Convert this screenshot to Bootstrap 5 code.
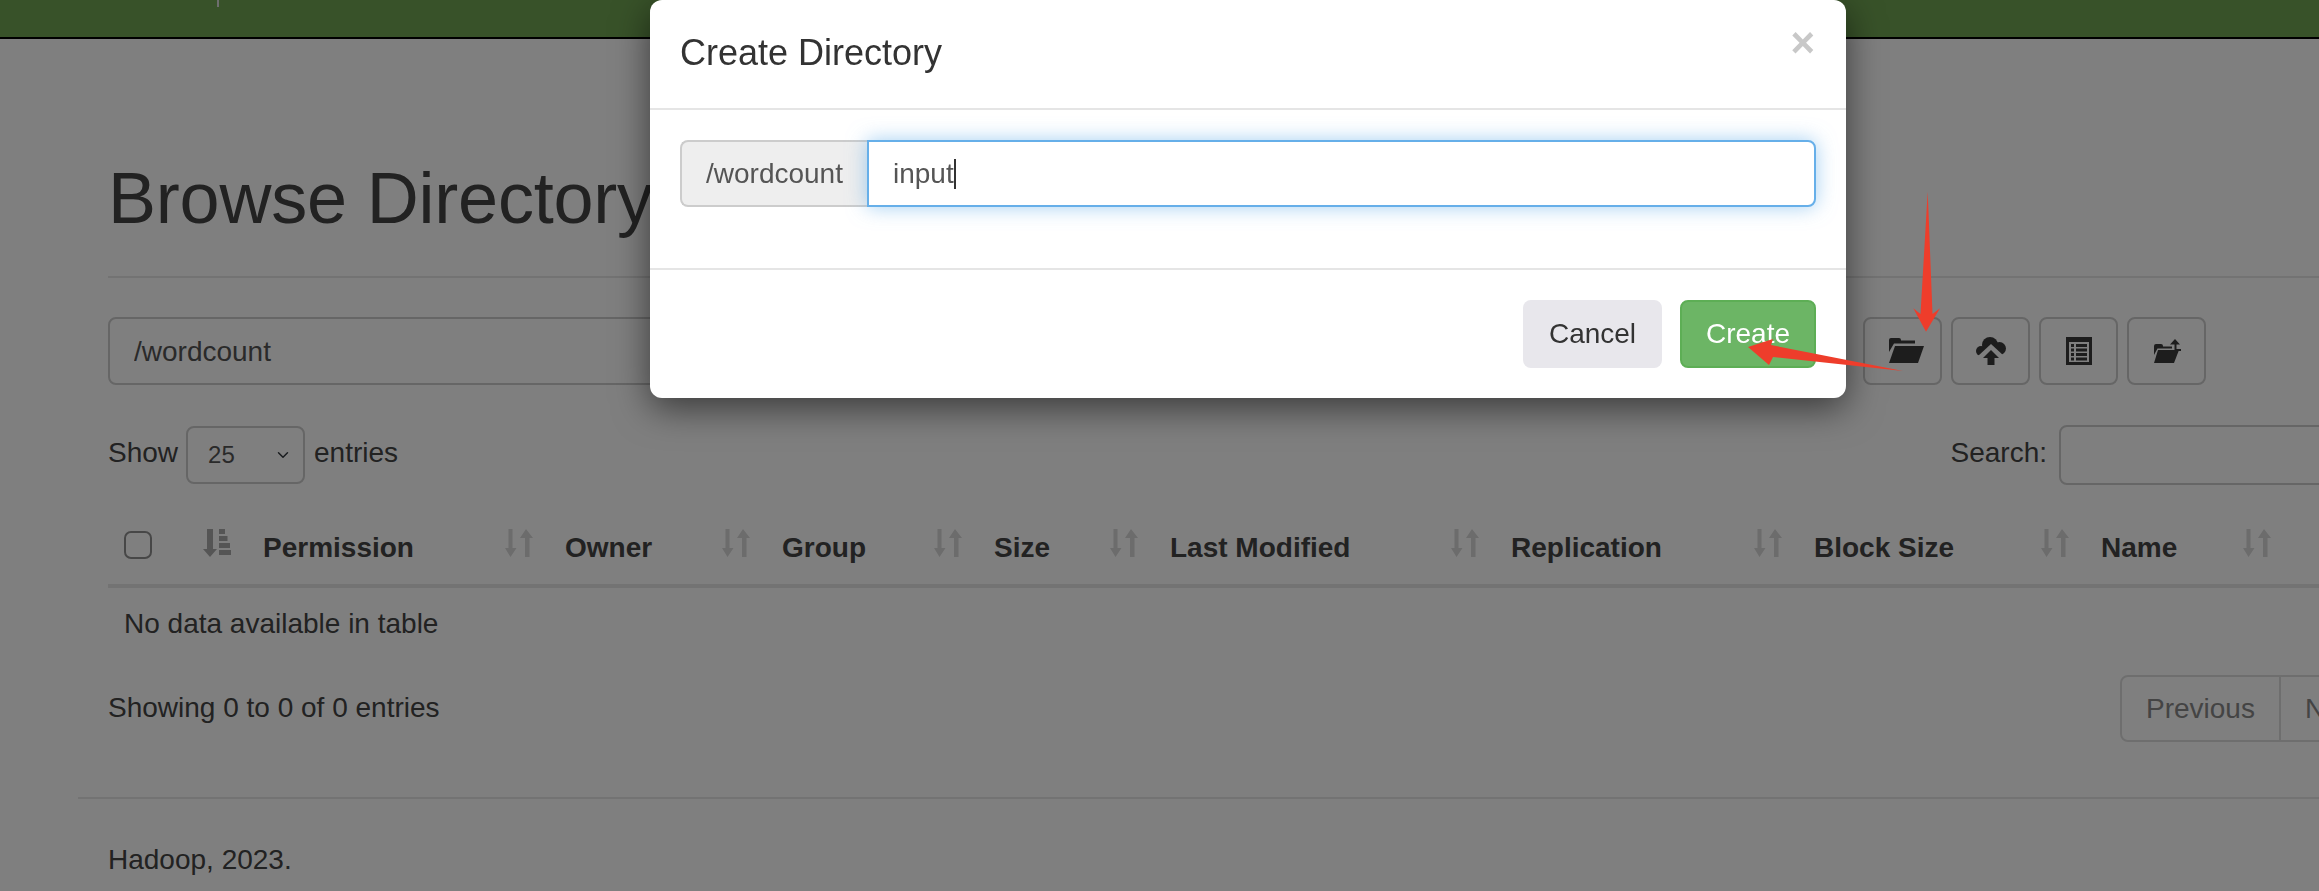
<!DOCTYPE html>
<html lang="en">
<head>
<meta charset="utf-8">
<title>Browse Directory</title>
<link href="https://cdn.jsdelivr.net/npm/bootstrap@5.3.0/dist/css/bootstrap.min.css" rel="stylesheet">
<style>
html,body{height:891px;width:2319px;overflow:hidden;margin:0}
body{font-family:"Liberation Sans",Arial,sans-serif;font-size:28px;line-height:40px;color:#444;background:#fff;position:relative}
.topbar{height:39px;background:#70a452;border-bottom:2px solid #000;padding:0 0 0 217px;align-items:flex-start}
.topbar-tick{display:block;width:2px;height:7px;background:#ddd}
.sheet{width:2480px;margin-left:78px;padding:0 0 0 30px}
.sheet-head{padding-top:120px;padding-bottom:38px;border-bottom:2px solid #e6e6e6}
.sheet-head h1{font-size:72px;line-height:79px;font-weight:400;margin:0;color:#444;letter-spacing:-.2px}
.tools{margin-top:39px;gap:9px}
.path-field{width:1737px;height:68px;flex:none;margin-right:9px;font-size:28px;padding:1px 24px 0;border:2px solid #ccc;border-radius:8px;color:#555;background:#fff}
.tool-btn{width:79px;height:68px;padding:0;border:2px solid #ccc;border-radius:8px;background:#fff;display:flex;align-items:center;justify-content:center}
.tool-btn svg{fill:#3a3a3a;display:block}
.tool-open svg{margin:-2px 0 0 6px}
.len-row{margin-top:40px;height:60px;align-items:center;line-height:56px}
.len-row span{margin-top:-4px}
.len-select{width:119px;height:58px;font-size:24px;padding:0 0 0 20px;margin:0 9px 0 8px;border:2px solid #ccc;border-radius:8px;color:#555}
.find-label{margin-right:12px}
.find-input{width:499px;height:60px;border:2px solid #ccc;border-radius:8px;background:#fff}
.dirtable{table-layout:fixed;width:2372px;margin:21px 0 0;border-collapse:collapse;color:#444}
.dirtable th{padding:22px 16px 16px;height:80px;border-bottom:4px solid #e6e6e6;font-weight:700;vertical-align:top;overflow:visible;white-space:nowrap}
.dirtable td{padding:16px 16px;line-height:40px}
.th-flex{display:flex;justify-content:space-between;align-items:flex-start}
.th-flex svg{display:block;margin-top:1px;flex:none}
.sort-idle{fill:#d8d8d8}
.sort-on{fill:#aaa}
.pick{width:28px;height:28px;margin:3px 0 0;border:2px solid #8f8f8f;border-radius:5px;float:none}
.info-row{margin-top:15px;height:67px;align-items:flex-start}
.info-text{margin-top:13px}
.pager{margin-left:auto;display:flex;height:67px;width:438px;border:2px solid #ddd;border-radius:8px 0 0 8px;color:#888;line-height:63px}
.pager-cell{padding:0 24px;border-right:2px solid #ddd;width:159px;flex:none;white-space:nowrap}
.foot-line{border-top:2px solid #e6e6e6;margin:55px 0 0 -30px;padding:41px 0 0 30px}
.modal-backdrop.show{opacity:.5}
.dlg{position:absolute;left:650px;top:0;width:1196px;z-index:1055}
.dlg .modal-content{background:#fff;border:0;border-radius:12px;box-shadow:0 10px 36px rgba(0,0,0,.55);color:#333;height:398px;display:block}
.dlg .modal-header{height:110px;padding:0 31px 0 30px;border-bottom:2px solid #e5e5e5;border-radius:0;align-items:flex-start;display:flex;justify-content:space-between}
.dlg-title{font-size:36px;line-height:40px;margin:33px 0 0;font-weight:400}
.dlg-x{font-size:42px;line-height:42px;font-weight:700;color:#c8c8c8;border:0;background:none;padding:0;margin:22px 0 0}
.dlg .modal-body{height:158px;padding:30px 30px 0 30px;flex:none}
.dlg .modal-footer{height:130px;padding:30px 30px;border-top:2px solid #e5e5e5;gap:18px;display:flex;justify-content:flex-end;align-items:flex-start;border-radius:0}
.dlg .modal-footer .btn{margin:0}
.addon{width:188px;height:67px;padding:0 0 0 24px;font-size:28px;background:#eee;border:2px solid #ccc;border-right:0;border-radius:8px 0 0 8px;color:#555}
.entry{flex:1;height:67px;padding:11px 24px;font-size:28px;line-height:41px;border:2px solid #66afe9;border-radius:0 8px 8px 0;box-shadow:0 0 20px rgba(102,175,233,.6);color:#555;background:#fff;display:flex;align-items:center}
.caret-mark{display:inline-block;width:2px;height:30px;background:#333}
.btn-off,.btn-go{height:68px;border-radius:8px;font-size:28px;line-height:40px;padding:12px 24px}
.btn-off{width:139px;background:#e8e7ec;border:0;color:#333}
.btn-go{width:136px;background:#6cb565;border:2px solid #5dae55;color:#fff;padding:10px 0}
.marks{position:absolute;left:0;top:0;z-index:1060;pointer-events:none}
</style>
</head>
<body>
<nav class="navbar topbar"><span class="topbar-tick"></span></nav>

<main class="sheet">
  <div class="sheet-head"><h1>Browse Directory</h1></div>

  <div class="d-flex tools">
    <input class="form-control path-field" type="text" value="/wordcount" aria-label="Path">
    <button class="btn tool-btn tool-open" type="button" aria-label="Create directory">
      <svg width="36" height="26" viewBox="0 0 36 26"><path d="M1 3Q1 1 3 1H11Q13 1 13 3V3.500H27V6.500H6L1 15Z"/><path d="M7 9H36L30 26H1Z"/></svg>
    </button>
    <button class="btn tool-btn" type="button" aria-label="Upload">
      <svg width="30" height="28" viewBox="0 0 30 28"><circle cx="5" cy="14" r="5"/><circle cx="14" cy="8" r="8"/><circle cx="23.500" cy="11.500" r="6.500"/><rect x="5" y="10" width="19" height="9"/><path d="M15 7L28 19V26H2V19Z" fill="#fff"/><path d="M15 13L23 21H18.500V28H11.500V21H7Z"/></svg>
    </button>
    <button class="btn tool-btn" type="button" aria-label="Concat">
      <svg width="26" height="28" viewBox="0 0 26 28"><path fill-rule="evenodd" d="M0 0H26V28H0ZM3 5V25H23V5Z"/><path d="M5 7H8V10H5ZM10 7H21V10H10ZM5 11.500H8V14.500H5ZM10 11.500H21V14.500H10ZM5 16H8V19H5ZM10 16H21V19H10ZM5 20.500H8V23.500H5ZM10 20.500H21V23.500H10Z"/></svg>
    </button>
    <button class="btn tool-btn" type="button" aria-label="Parent directory">
      <svg width="28" height="24" viewBox="0 0 28 24"><path d="M1 7Q1 5 3 5H8Q10 5 10 7V7.500H19V9.500H4.500L1 16Z"/><path d="M5 11H26L21 24H1Z"/><path d="M22 0L27 5.500H23.500V10H28V12H21.500V5.500H17Z"/></svg>
    </button>
  </div>

  <div class="d-flex len-row">
    <span>Show</span>
    <select class="form-select len-select" aria-label="Entries"><option>25</option></select>
    <span>entries</span>
    <span class="find-label ms-auto">Search:</span>
    <input class="find-input" type="search" aria-label="Search">
  </div>

  <table class="dirtable">
    <colgroup><col style="width:139px"><col style="width:302px"><col style="width:217px"><col style="width:212px"><col style="width:176px"><col style="width:341px"><col style="width:303px"><col style="width:287px"><col style="width:202px"><col style="width:193px"></colgroup>
    <thead>
      <tr>
        <th><div class="th-flex"><input class="form-check-input pick" type="checkbox" aria-label="Select all"><svg class="sort-on" width="28" height="28" viewBox="0 0 28 28"><path d="M4 0H10V20H14L7 28L0 20H4Z"/><path d="M16 0H22V5H16ZM16 7H24.500V12H16ZM16 14H27V19H16ZM16 21H28V26H16Z"/></svg></div></th>
        <th><div class="th-flex">Permission<svg class="sort-idle" width="28" height="28"><use href="#both"/></svg></div></th>
        <th><div class="th-flex">Owner<svg class="sort-idle" width="28" height="28"><use href="#both"/></svg></div></th>
        <th><div class="th-flex">Group<svg class="sort-idle" width="28" height="28"><use href="#both"/></svg></div></th>
        <th><div class="th-flex">Size<svg class="sort-idle" width="28" height="28"><use href="#both"/></svg></div></th>
        <th><div class="th-flex">Last Modified<svg class="sort-idle" width="28" height="28"><use href="#both"/></svg></div></th>
        <th><div class="th-flex">Replication<svg class="sort-idle" width="28" height="28"><use href="#both"/></svg></div></th>
        <th><div class="th-flex">Block Size<svg class="sort-idle" width="28" height="28"><use href="#both"/></svg></div></th>
        <th><div class="th-flex">Name<svg class="sort-idle" width="28" height="28"><use href="#both"/></svg></div></th>
        <th></th>
      </tr>
    </thead>
    <tbody><tr><td colspan="10">No data available in table</td></tr></tbody>
  </table>

  <div class="d-flex info-row">
    <span class="info-text">Showing 0 to 0 of 0 entries</span>
    <div class="pager"><span class="pager-cell">Previous</span><span class="pager-cell">Next</span></div>
  </div>

  <div class="foot-line">Hadoop, 2023.</div>
</main>

<svg width="0" height="0" class="d-block" aria-hidden="true"><defs><g id="both"><path d="M3.500 0H7.500V19H11.500L5.500 28L0 19H3.500Z"/><path d="M21 0L28 9H24.500V28H20V9H15Z"/></g></defs></svg>

<div class="modal-backdrop show"></div>

<div class="dlg" role="dialog">
  <div class="modal-content">
    <div class="modal-header">
      <h4 class="dlg-title">Create Directory</h4>
      <button class="dlg-x" type="button" aria-label="Close">×</button>
    </div>
    <div class="modal-body">
      <div class="input-group flex-nowrap">
        <span class="input-group-text addon">/wordcount</span>
        <div class="entry">input<span class="caret-mark"></span></div>
      </div>
    </div>
    <div class="modal-footer">
      <button class="btn btn-off" type="button">Cancel</button>
      <button class="btn btn-go" type="button">Create</button>
    </div>
  </div>
</div>

<svg class="marks" width="2319" height="891" viewBox="0 0 2319 891" aria-hidden="true" fill="#ee3d2b">
  <path d="M1927.700 191.700L1932.500 314L1940 308.300L1926 331.700L1913.300 308.300L1920.500 314Z"/>
  <path d="M1748 347L1773 339L1771 345L1903 371L1773 357L1769 365Z"/>
</svg>

<script src="https://cdn.jsdelivr.net/npm/bootstrap@5.3.0/dist/js/bootstrap.bundle.min.js"></script>
</body>
</html>
